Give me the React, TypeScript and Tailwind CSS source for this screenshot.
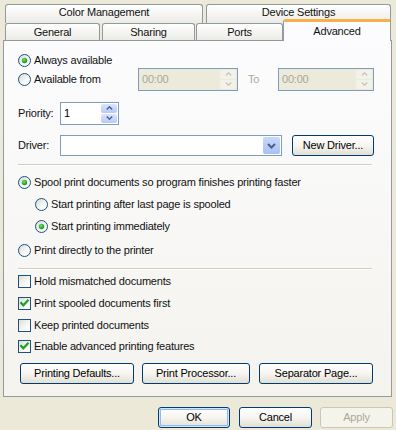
import type { ReactNode } from 'react';

const font = "font-['Liberation_Sans',Arial,sans-serif]";

function Radio({ checked }: { checked?: boolean }) {
  return (
    <svg width="13" height="13" viewBox="0 0 13 13" className="shrink-0">
      <defs>
        <linearGradient id="radioFill" x1="0" y1="0" x2="1" y2="1">
          <stop offset="0" stopColor="#d8d8d0" />
          <stop offset="0.6" stopColor="#f8f8f6" />
          <stop offset="1" stopColor="#ffffff" />
        </linearGradient>
        <radialGradient id="radioDot" cx="0.4" cy="0.35" r="0.7">
          <stop offset="0" stopColor="#7be37a" />
          <stop offset="0.6" stopColor="#2eb02d" />
          <stop offset="1" stopColor="#1a8a1a" />
        </radialGradient>
      </defs>
      <circle cx="6.5" cy="6.5" r="6" fill="url(#radioFill)" stroke="#1c5180" strokeWidth="1" />
      {checked && <circle cx="6.5" cy="6.5" r="2.7" fill="url(#radioDot)" />}
    </svg>
  );
}

function Check({ checked }: { checked?: boolean }) {
  return (
    <svg width="13" height="13" viewBox="0 0 13 13" className="shrink-0">
      <defs>
        <linearGradient id="checkFill" x1="0" y1="0" x2="1" y2="1">
          <stop offset="0" stopColor="#dcdcd5" />
          <stop offset="0.6" stopColor="#f8f8f6" />
          <stop offset="1" stopColor="#ffffff" />
        </linearGradient>
      </defs>
      <rect x="0.5" y="0.5" width="12" height="12" fill="url(#checkFill)" stroke="#1c5180" />
      {checked && (
        <polyline
          points="3.2,6 5.3,8.3 9.8,3.6"
          fill="none"
          stroke="#21a121"
          strokeWidth="2.2"
          strokeLinecap="square"
        />
      )}
    </svg>
  );
}

function Option({
  kind,
  checked,
  children,
  className = '',
}: {
  kind: 'radio' | 'check';
  checked?: boolean;
  children: ReactNode;
  className?: string;
}) {
  return (
    <div className={`flex h-[16px] items-center ${className}`}>
      {kind === 'radio' ? <Radio checked={checked} /> : <Check checked={checked} />}
      <span className="ml-[3px] whitespace-nowrap">{children}</span>
    </div>
  );
}

function Arrow({ up, color }: { up?: boolean; color: string }) {
  return (
    <svg width="7" height="4" viewBox="0 0 7 4">
      <polyline
        points={up ? '0.8,3.5 3.5,0.8 6.2,3.5' : '0.8,0.5 3.5,3.2 6.2,0.5'}
        fill="none"
        stroke={color}
        strokeWidth="1.4"
      />
    </svg>
  );
}

function SpinBox({
  value,
  width,
  disabled,
}: {
  value: string;
  width: string;
  disabled?: boolean;
}) {
  return (
    <div
      className={`flex h-[23px] items-stretch border border-[#7f9db9] p-px ${width} ${
        disabled ? 'bg-[#ebeadb] text-[#aca899]' : 'bg-white text-black'
      }`}
    >
      <span className="flex flex-1 items-center pl-[2px]">{value}</span>
      <div className="flex w-[16px] flex-col gap-px">
        {disabled ? (
          <>
            <div className="flex flex-1 items-center justify-center rounded-[2px] bg-[#f3f2ea]">
              <Arrow up color="#c9c7ba" />
            </div>
            <div className="flex flex-1 items-center justify-center rounded-[2px] bg-[#f3f2ea]">
              <Arrow color="#c9c7ba" />
            </div>
          </>
        ) : (
          <>
            <div className="flex flex-1 items-center justify-center rounded-[2px] bg-linear-to-b from-[#dbe5fc] to-[#b6c9f4]">
              <Arrow up color="#4d6185" />
            </div>
            <div className="flex flex-1 items-center justify-center rounded-[2px] bg-linear-to-b from-[#dbe5fc] to-[#b6c9f4]">
              <Arrow color="#4d6185" />
            </div>
          </>
        )}
      </div>
    </div>
  );
}

function Btn({
  children,
  className = '',
  isDefault,
  disabled,
}: {
  children: ReactNode;
  className?: string;
  isDefault?: boolean;
  disabled?: boolean;
}) {
  const look = disabled
    ? 'border-[#c9c7ba] bg-[#f5f4ea] text-[#aca899]'
    : 'border-[#003c74] bg-linear-to-b from-white via-[#f6f5f0] to-[#e2dfd3] text-black';
  const ring = isDefault ? 'shadow-[inset_0_0_0_1px_#cee7ff,inset_0_0_0_2px_#98b8ea]' : '';
  return (
    <button
      className={`flex h-[21px] shrink-0 items-center justify-center rounded-[3px] border ${look} ${ring} ${className}`}
    >
      {children}
    </button>
  );
}

const tab =
  'flex shrink-0 items-center justify-center rounded-t-[3px] border border-b-0 border-[#919b9c] bg-linear-to-b from-white to-[#ecebe6]';

export default function App() {
  return (
    <div
      className={`h-[430px] w-[396px] overflow-hidden bg-[#ece9d8] text-[11px] leading-none tracking-[-0.2px] text-[#111] ${font}`}
    >
      {/* tabs */}
      <div className="pt-[4px]">
        <div className="ml-[5px] flex h-[19px]">
          <div className={`${tab} w-[198px] pb-[4px]`}>Color Management</div>
          <div className={`${tab} ml-[3px] w-[185px] pb-[4px]`}>Device Settings</div>
        </div>
        <div className="flex h-[17px] items-end pl-[5px]">
          <div className={`${tab} h-[17px] w-[95px]`}>General</div>
          <div className={`${tab} ml-[2px] h-[17px] w-[93px]`}>Sharing</div>
          <div className={`${tab} ml-px h-[17px] w-[87px]`}>Ports</div>
          <div className="relative z-10 -mb-px flex h-[22px] w-[108px] shrink-0 items-center justify-center rounded-t-[3px] border border-t-[3px] border-b-0 border-[#919b9c] border-t-[#f7b14a] bg-[#fcfcfe]">
            Advanced
          </div>
        </div>
      </div>

      {/* page */}
      <div className="ml-[3px] flex h-[357px] w-[389px] flex-col border border-[#919b9c] bg-linear-to-b from-[#fcfcfe] to-[#f4f3ee] pl-[14px] pt-[11px]">
        <Option kind="radio" checked>
          Always available
        </Option>

        <div className="flex h-[22px] items-center">
          <div className="w-[120px]">
            <Option kind="radio">Available from</Option>
          </div>
          <SpinBox value="00:00" width="w-[100px]" disabled />
          <span className="ml-[10px] w-[30px] text-[#aca899]">To</span>
          <SpinBox value="00:00" width="w-[96px]" disabled />
        </div>

        <div className="mt-[12px] flex h-[22px] items-center">
          <span className="w-[42px]">Priority:</span>
          <SpinBox value="1" width="w-[59px]" />
        </div>

        <div className="mt-[11px] flex h-[21px] items-center">
          <span className="w-[42px]">Driver:</span>
          <div className="flex h-[21px] w-[222px] items-stretch justify-end border border-[#7f9db9] bg-white p-px">
            <div className="flex w-[17px] items-center justify-center rounded-[2px] bg-linear-to-b from-[#c8d8fb] to-[#a9c0f1]">
              <svg width="9" height="6" viewBox="0 0 9 6">
                <polyline points="1,1 4.5,4.5 8,1" fill="none" stroke="#4d6185" strokeWidth="2" />
              </svg>
            </div>
          </div>
          <Btn className="ml-[10px] w-[82px]">New Driver...</Btn>
        </div>

        <div className="mt-[8px] h-[2px] w-[354px] border-t border-b border-t-[#d0d0bf] border-b-white" />

        <Option kind="radio" checked className="mt-[8px]">
          Spool print documents so program finishes printing faster
        </Option>
        <Option kind="radio" className="mt-[6px] pl-[17px]">
          Start printing after last page is spooled
        </Option>
        <Option kind="radio" checked className="mt-[6px] pl-[17px]">
          Start printing immediately
        </Option>
        <Option kind="radio" className="mt-[8px]">
          Print directly to the printer
        </Option>

        <div className="mt-[10px] h-[2px] w-[354px] border-t border-b border-t-[#d0d0bf] border-b-white" />

        <Option kind="check" className="mt-[3px]">
          Hold mismatched documents
        </Option>
        <Option kind="check" checked className="mt-[6px]">
          Print spooled documents first
        </Option>
        <Option kind="check" className="mt-[6px]">
          Keep printed documents
        </Option>
        <Option kind="check" checked className="mt-[5px]">
          Enable advanced printing features
        </Option>

        <div className="mt-[9px] flex">
          <Btn className="ml-[2px] w-[114px]">Printing Defaults...</Btn>
          <Btn className="ml-[8px] w-[108px]">Print Processor...</Btn>
          <Btn className="ml-[9px] w-[114px]">Separator Page...</Btn>
        </div>
      </div>

      {/* dialog buttons */}
      <div className="mt-[10px] flex justify-end pr-[3px]">
        <Btn isDefault className="w-[72px]">
          OK
        </Btn>
        <Btn className="ml-[9px] w-[73px]">Cancel</Btn>
        <Btn disabled className="ml-[8px] w-[73px]">
          Apply
        </Btn>
      </div>
    </div>
  );
}
